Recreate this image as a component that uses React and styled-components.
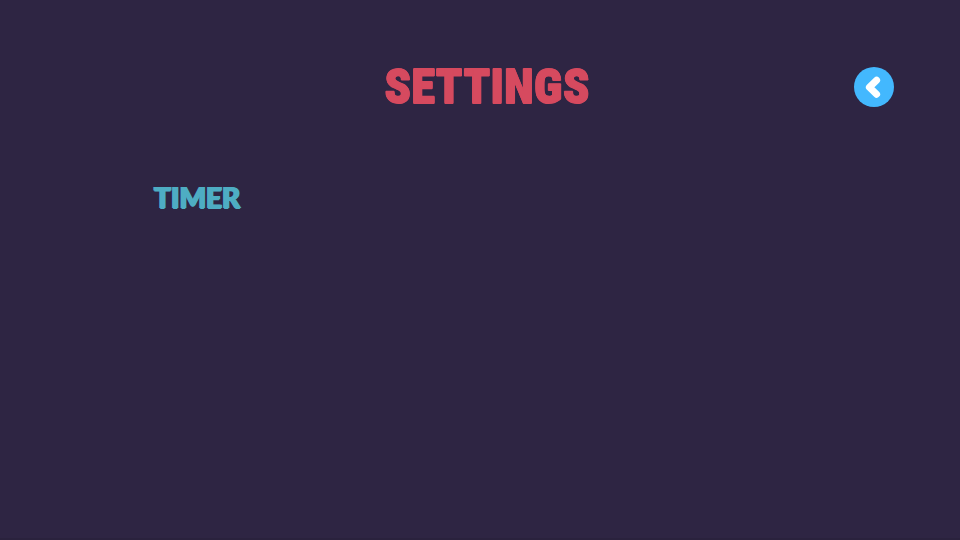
import React from "react";
import styled, { createGlobalStyle } from "styled-components";

const GlobalStyle = createGlobalStyle`
  body {
    margin: 0;
    background: #2e2543;
  }
`;

const Screen = styled.main`
  box-sizing: border-box;
  min-height: 100vh;
  background: #2e2543;
  border-bottom: 2px solid #2a223d;
`;

const Header = styled.header`
  display: grid;
  grid-template-columns: 1fr auto 1fr;
  align-items: center;
  padding: 67px 66px 0 80px;
`;

const Title = styled.h1`
  grid-column: 2;
  margin: 0;
  font: 900 49px/40px "Roboto Condensed", Roboto, sans-serif;
  color: #d64a5f;
  -webkit-text-stroke: 1px #d64a5f;
  text-shadow:
    0 1px #d64a5f,
    0 -1px #d64a5f;
`;

const BackButton = styled.button`
  justify-self: end;
  display: grid;
  place-items: center;
  width: 40px;
  height: 40px;
  padding: 0;
  border: 0;
  border-radius: 50%;
  background: #43b8fe;
  cursor: pointer;
`;

const Section = styled.section`
  padding: 74px 154px 0;
`;

const SectionTitle = styled.h2`
  margin: 0;
  font: 900 28px/32px Lato, "Liberation Sans", sans-serif;
  color: #4eadc3;
  text-shadow:
    1px 0 #4eadc3,
    -1px 0 #4eadc3,
    0 1px #4eadc3;
`;

function ChevronLeft() {
  return (
    <svg width="40" height="40" viewBox="0 0 40 40" aria-hidden="true">
      <path
        d="M22.6 13.2 L15.4 20.3 L22.6 27.2"
        fill="none"
        stroke="#fff"
        strokeWidth="7"
        strokeLinecap="round"
        strokeLinejoin="round"
      />
    </svg>
  );
}

export default function App() {
  return (
    <>
      <GlobalStyle />
      <Screen>
        <Header>
          <Title>SETTINGS</Title>
          <BackButton type="button" aria-label="Back">
            <ChevronLeft />
          </BackButton>
        </Header>
        <Section>
          <SectionTitle>TIMER</SectionTitle>
        </Section>
      </Screen>
    </>
  );
}
